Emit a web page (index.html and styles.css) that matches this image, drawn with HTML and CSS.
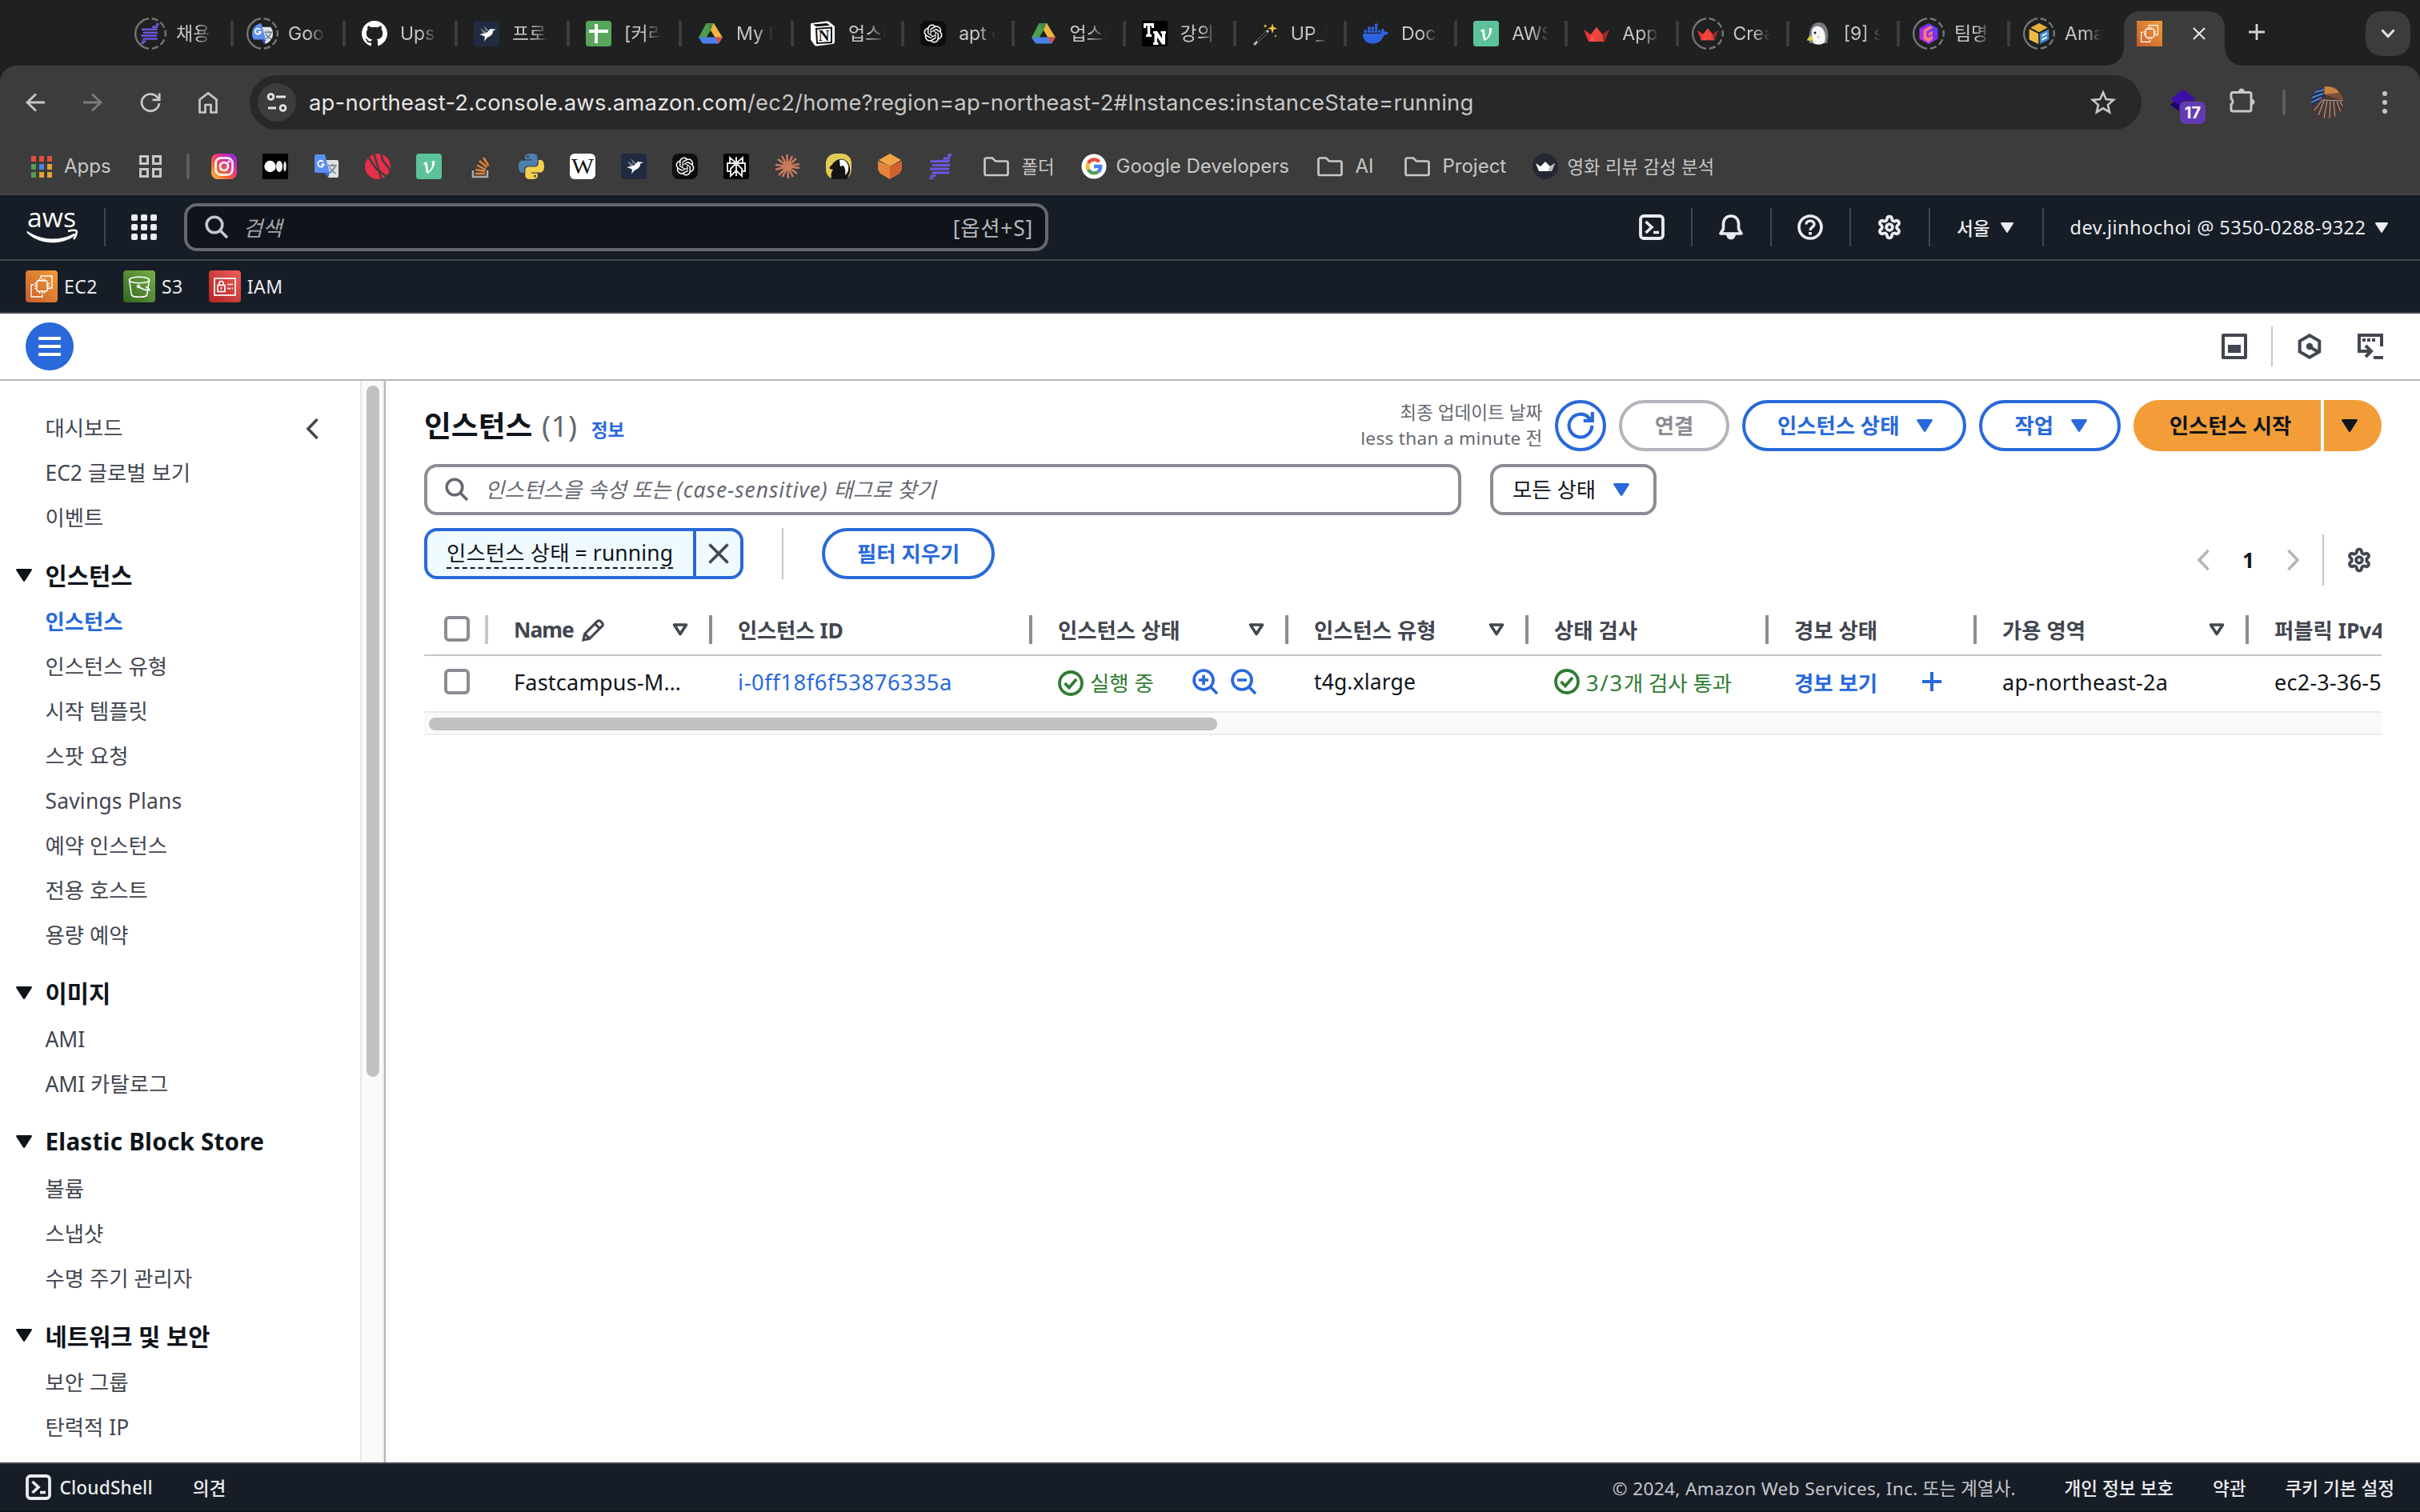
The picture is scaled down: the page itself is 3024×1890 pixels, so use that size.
FILE: index.html
```html
<!DOCTYPE html>
<html lang="ko">
<head>
<meta charset="utf-8">
<title>인스턴스 | EC2 | ap-northeast-2</title>
<link rel="stylesheet" href="styles.css">
</head>
<body>
<svg class="defs" width="0" height="0" aria-hidden="true">
  <defs>
    <linearGradient id="g-green" x1="0" y1="1" x2="1" y2="0"><stop offset="0" stop-color="#31681e"/><stop offset="1" stop-color="#79ae4b"/></linearGradient>
    <linearGradient id="g-red" x1="0" y1="1" x2="1" y2="0"><stop offset="0" stop-color="#b12325"/><stop offset="1" stop-color="#ec5e59"/></linearGradient>
    <linearGradient id="g-insta" x1="0" y1="1" x2="1" y2="0"><stop offset="0" stop-color="#fdc63c"/><stop offset=".35" stop-color="#f4603c"/><stop offset=".65" stop-color="#e0309a"/><stop offset="1" stop-color="#7a2df0"/></linearGradient>
    <linearGradient id="g-hex" x1="0" y1="1" x2="1" y2="0"><stop offset="0" stop-color="#d32df5"/><stop offset=".55" stop-color="#8a2cf0"/><stop offset="1" stop-color="#3a4bff"/></linearGradient>
    <clipPath id="c-avatar"><circle cx="20" cy="20" r="20"/></clipPath>
    <clipPath id="c-round"><circle cx="16" cy="16" r="16"/></clipPath>
  </defs>
  <symbol id="ring" viewBox="0 0 40 40"><circle cx="20" cy="20" r="18.800" fill="none" stroke="#747474" stroke-width="2.400" pathLength="360" stroke-dasharray="25 11 25 11 25 11 25 11 25 12 168 11" transform="rotate(-85 20 20)"/></symbol>
  <symbol id="bars" viewBox="0 0 32 32"><g fill="#6f55dc"><path d="M25 0h4.500l-1.500 4.500h-4.500z"/><path d="M19 4.500h8.500l-1 3H18z"/><path d="M3 8h24l-1 3.200H2z"/><path d="M5 13h22v3H5z"/><path d="M2 17.500h24v3.200H2z"/><path d="M5 22.500h22l-1 3H4z"/><path d="M3 26.500h7l-1 2.500H2z"/><path d="M2 29.500h5L6 32H1z"/></g></symbol>
  <symbol id="translate" viewBox="0 0 32 32"><path d="M12 8h17a2 2 0 0 1 2 2v18a2 2 0 0 1-2 2H18z" fill="#dfe1e5"/><path d="M18 15h11M23.500 13v2M27 15c-1 4-4 7-7 9M20 17c2 4 4 6 8 8" stroke="#6b7f92" stroke-width="1.600" fill="none"/><path d="M13 24h7l-2 6z" fill="#3a67c9"/><path d="M3 1h11l6 23H3a2 2 0 0 1-2-2V3a2 2 0 0 1 2-2z" fill="#5a8df0"/><path d="M12 10.500a3.800 3.800 0 1 0 .7 3H9.500" stroke="#fff" stroke-width="1.800" fill="none"/></symbol>
  <symbol id="translate-round" viewBox="0 0 32 32"><g clip-path="url(#c-round)"><path d="M14 6h18v22a4 4 0 0 1-4 4H20z" fill="#dfe1e5"/><path d="M19 14h12M25 12v2M29 14c-1 4-4 8-8 10M21 16c2 4 5 7 9 9" stroke="#6b7f92" stroke-width="1.800" fill="none"/><path d="M14 25h7l-2 7z" fill="#3a47b9"/><path d="M0 0h14l7 25H0z" fill="#5a8df0"/></g><path d="M12.500 10a4.300 4.300 0 1 0 .8 3.500H9.500" stroke="#fff" stroke-width="2.200" fill="none"/></symbol>
  <symbol id="github" viewBox="0 0 16 16"><path fill="#fff" d="M8 0C3.580 0 0 3.580 0 8c0 3.540 2.290 6.530 5.470 7.590.4.070.55-.17.55-.38 0-.19-.010-.82-.010-1.490-2.010.37-2.530-.49-2.690-.94-.090-.23-.48-.94-.82-1.130-.28-.15-.68-.52-.010-.53.63-.010 1.080.58 1.230.82.72 1.210 1.870.87 2.330.66.070-.52.28-.87.51-1.070-1.780-.2-3.640-.89-3.640-3.950 0-.87.31-1.590.82-2.150-.080-.2-.36-1.020.080-2.120 0 0 .67-.21 2.200.82.64-.18 1.320-.27 2-.27s1.360.090 2 .27c1.530-1.040 2.200-.82 2.200-.82.44 1.100.16 1.920.080 2.120.51.56.82 1.270.82 2.150 0 3.070-1.870 3.750-3.650 3.950.29.25.54.73.54 1.480 0 1.070-.010 1.930-.010 2.200 0 .21.15.46.55.38A8.010 8.010 0 0 0 16 8c0-4.420-3.580-8-8-8z"/></symbol>
  <symbol id="bird" viewBox="0 0 32 32"><rect width="32" height="32" rx="4" fill="#202b41"/><path d="M12 6l8 7-5-.5zM8 9l9 6-5 1z" fill="#777f8e"/><path d="M7 17l9-2 5-5 3 .6 4 .2-4 2c0 5-4 7-7 8l-4 5 1-6c-2-1-3-1.500-7-2.800z" fill="#fff"/></symbol>
  <symbol id="sheet" viewBox="0 0 32 32"><rect width="32" height="32" rx="3.500" fill="#57a65b"/><path d="M11 4h4v24h-4zM4 11h24v4H4z" fill="#fff"/></symbol>
  <symbol id="drive" viewBox="0 0 32 32"><path d="M10.500 3h9.500L31 21h-9.500z" fill="#f2b53d"/><path d="M10.500 3L16 12 6.500 28 1 21z" fill="#4b9e4f"/><path d="M10.500 3h9L16 12z" fill="#3f8f49"/><path d="M16 12.500l4.500 7.500h-9z" fill="#1f2120"/><path d="M1 20.500h30l-5 8H6z" fill="#4a80ec"/><path d="M21.500 20.500H31l-5 8z" fill="#d9503f"/></symbol>
  <symbol id="notion" viewBox="0 0 32 32"><path d="M2 3l19-2.500c2 0 3 .5 4 1.500l5 4c1 1 1 1.500 1 3v17c0 2-1 3-3 3L9 31.500c-2 0-2.500-.5-3.500-1.500L2 25c-1-1-1-2-1-3V5c0-1 0-1.800 1-2z" fill="#fff"/><path d="M4 4.500l17-1.500 4 3-17 1.200z" fill="#111"/><path d="M8 10l19-1.500V27L9 28z" fill="#fff" stroke="#111" stroke-width="2"/><text x="17.500" y="25" text-anchor="middle" class="ico-serif" font-size="19" fill="#111">N</text></symbol>
  <symbol id="gpt" viewBox="0 0 32 32"><rect width="32" height="32" rx="8" fill="#0d0d0d"/><path transform="translate(4.500 4.500) scale(.958)" fill="#fff" d="M22.2819 9.8211a5.9847 5.9847 0 0 0-.5157-4.9108 6.0462 6.0462 0 0 0-6.5098-2.9A6.0651 6.0651 0 0 0 4.9807 4.1818a5.9847 5.9847 0 0 0-3.9977 2.9 6.0462 6.0462 0 0 0 .7427 7.0966 5.98 5.98 0 0 0 .511 4.9107 6.051 6.051 0 0 0 6.5146 2.9001A5.9847 5.9847 0 0 0 13.2599 24a6.0557 6.0557 0 0 0 5.7718-4.2058 5.9894 5.9894 0 0 0 3.9977-2.9001 6.0557 6.0557 0 0 0-.7475-7.0729zm-9.022 12.6081a4.4755 4.4755 0 0 1-2.8764-1.0408l.1419-.0804 4.7783-2.7582a.7948.7948 0 0 0 .3927-.6813v-6.7369l2.02 1.1686a.071.071 0 0 1 .038.052v5.5826a4.504 4.504 0 0 1-4.4945 4.4944zm-9.6607-4.1254a4.4708 4.4708 0 0 1-.5346-3.0137l.142.0852 4.783 2.7582a.7712.7712 0 0 0 .7806 0l5.8428-3.3685v2.3324a.0804.0804 0 0 1-.0332.0615L9.74 19.9502a4.4992 4.4992 0 0 1-6.1408-1.6464zM2.3408 7.8956a4.485 4.485 0 0 1 2.3655-1.9728V11.6a.7664.7664 0 0 0 .3879.6765l5.8144 3.3543-2.0201 1.1685a.0757.0757 0 0 1-.071 0l-4.8303-2.7865A4.504 4.504 0 0 1 2.3408 7.872zm16.5963 3.8558L13.1038 8.364 15.1192 7.2a.0757.0757 0 0 1 .071 0l4.8303 2.7913a4.4944 4.4944 0 0 1-.6765 8.1042v-5.6772a.79.79 0 0 0-.407-.667zm2.0107-3.0231l-.142-.0852-4.7735-2.7818a.7759.7759 0 0 0-.7854 0L9.409 9.2297V6.8974a.0662.0662 0 0 1 .0284-.0615l4.8303-2.7866a4.4992 4.4992 0 0 1 6.6802 4.66zM8.3065 12.863l-2.02-1.1638a.0804.0804 0 0 1-.038-.0567V6.0742a4.4992 4.4992 0 0 1 7.3757-3.4537l-.142.0805L8.704 5.459a.7948.7948 0 0 0-.3927.6813zm1.0976-2.3654l2.602-1.4998 2.6069 1.4998v2.9994l-2.5974 1.4997-2.6067-1.4997Z"/></symbol>
  <symbol id="tn" viewBox="0 0 32 32"><rect width="32" height="32" fill="#000"/><path d="M2 3h13v6h-3V6.500h-1.800V17H12v3H5v-3h1.800V6.500H5V9H2z" fill="#fff"/><path d="M14 13h5l6 9v-6h-1.500v-3H30v3h-1v13.500h-4l-6-9v6.500h1.500v3H14v-3h1.500V16H14z" fill="#fff"/></symbol>
  <symbol id="wand" viewBox="0 0 32 32"><path d="M2 30L20 12" stroke="#bdbdbd" stroke-width="3"/><path d="M6 26L18 14" stroke="#111" stroke-width="2.200"/><path d="M25 3l1.500 5 4.500 1.500-4.500 1.500L25 16l-1.500-5L19 9.500 23.500 8z" fill="#f5c542"/><path d="M16 4l.7 1.800 1.800.7-1.800.7L16 9l-.7-1.800-1.800-.7 1.800-.7zM29 17l.5 1.500 1.500.5-1.500.5L29 21l-.5-1.500-1.500-.5 1.500-.5z" fill="#f5c542"/></symbol>
  <symbol id="docker" viewBox="0 0 32 32"><path fill="#2f62e3" d="M0 16h22c1.500-1 1.500-3.500 1-5l1.500-1.500c1.500 1 2.200 2.500 2.300 4 1.500-.3 3.500 0 5.200 1-1 2.500-3 3.200-5.500 3.200C24 25 18.500 28.500 12 28.500 4 28.500 0 23.500 0 16zM1.500 11.500H5v3.500H1.500zM6 11.500h3.500v3.500H6zM10.500 11.500H14v3.500h-3.500zM15 11.500h3.500v3.500H15zM19.500 11.500h2.500v3.500h-2.500zM6 7.500h3.500V11H6zM10.500 7.500H14V11h-3.500zM15 7.500h3.500V11H15zM15 3.500h3.500V7H15z"/></symbol>
  <symbol id="velog" viewBox="0 0 32 32"><rect width="32" height="32" rx="3.500" fill="#5cc29a"/><path d="M9.500 11.500l4-1.500 2 13C19 19 21 15 19.500 9.500l3.500-.5c1 5-2 11-7.500 15.500h-2.500l-2-11-1.500.3z" fill="#fff"/></symbol>
  <symbol id="crown" viewBox="0 0 32 32"><path d="M0 11l9 6 7-9 7 9 9-6-6 15H6z" fill="#e5342f"/><path d="M32 11l-9 6 1.500 9H26z" fill="#8f2a2b"/><path d="M16 8l7 9-7 9-7-9z" fill="#f0453f"/><path d="M9 17l7 9H7z" fill="#ff4b4b"/><path d="M23 17l-7 9h9z" fill="#e5443c"/></symbol>
  <symbol id="goose" viewBox="0 0 32 32"><path d="M5 28C3 12 8 2 17 2s14 10 10 26z" fill="#777b80"/><path d="M8 12C10 7 14 6 17 7c8 2 9 14 7 20-5 4-11 3-14 1-2-5-2-11-2-16z" fill="#f6f6f6"/><circle cx="12" cy="15" r="1.500" fill="#222"/><circle cx="16" cy="20" r="1.600" fill="#f3b991"/><path d="M7 18l2 4-1 3-6-.5c0-2 2-4 5-6.500z" fill="#e2cf3e"/></symbol>
  <symbol id="hex" viewBox="0 0 32 32"><path d="M16 0l14 8v16l-14 8-14-8V8z" fill="url(#g-hex)"/><path d="M23 7l-10 5.500v8l3 2 6-4v6l-6 4.500-8-5V10.500L18 4zM16 15l6-3v5l-6 3z" fill="#f27d78"/></symbol>
  <symbol id="awsdoc" viewBox="0 0 32 32"><path d="M16 0l13 7-13 7L3 7z" fill="#e3b13c"/><path d="M1 9l14 7v16L1 25z" fill="#edbb45"/><path d="M17 16l14-7v16l-14 7z" fill="#3f86c6"/><path d="M20 18l8-4v3l-8 4zM20 24l8-4v3l-8 4z" fill="#dcecf8"/></symbol>
  <symbol id="ec2" viewBox="0 0 40 40"><g fill="none" stroke="#fff" stroke-width="1.400"><path d="M19 10V7h14v15h-3M10 18H7v15h14v-3"/><rect x="14" y="13" width="13" height="13" rx="1"/><path d="M17.500 10v3M20.500 10v3M23.500 10v3M17.500 26v3M20.500 26v3M23.500 26v3M11 16.500h3M11 19.500h3M11 22.500h3M27 16.500h3M27 19.500h3M27 22.500h3"/></g></symbol>

  <symbol id="back" viewBox="0 0 32 32"><path d="M28 16H6M17 5.500L6 16l11 10.500" fill="none" stroke="currentColor" stroke-width="2.800"/></symbol>
  <symbol id="reload" viewBox="0 0 32 32"><path d="M27 17a11 10.500 0 1 1-2.500-7.500L27 12" fill="none" stroke="currentColor" stroke-width="2.800"/><path d="M27.200 4.500v8.300h-8.700" fill="none" stroke="currentColor" stroke-width="2.800"/></symbol>
  <symbol id="home" viewBox="0 0 32 32"><path d="M5.500 12.500L16 4.500l10.500 8V28.500h-7V19h-7v9.500h-7z" fill="none" stroke="currentColor" stroke-width="2.700"/></symbol>
  <symbol id="tune" viewBox="0 0 32 32"><g fill="none" stroke="currentColor" stroke-width="2.800"><circle cx="8.500" cy="9" r="3.400"/><path d="M15 9h12M5 23h10"/><circle cx="23.500" cy="23" r="3.400"/></g></symbol>
  <symbol id="star" viewBox="0 0 32 32"><path d="M16 3.500l3.700 8.600 9.300.8-7 6.200 2.100 9.100-8.100-4.900-8.100 4.900L10 19.100l-7-6.200 9.300-.8z" fill="none" stroke="currentColor" stroke-width="2.600"/></symbol>
  <symbol id="puzzle" viewBox="0 0 32 32"><path d="M4 6.500h21a2 2 0 0 1 2 2V28a2 2 0 0 1-2 2H4a2 2 0 0 1-2-2v-6.500a4 4 0 0 0 0-7V8.500a2 2 0 0 1 2-2z" fill="none" stroke="currentColor" stroke-width="3"/><path d="M11 6a4 4.500 0 0 1 8 0zM27 14.500a4.500 4 0 0 1 0 8z" fill="currentColor"/></symbol>
  <symbol id="folder" viewBox="0 0 32 32"><path d="M3.500 5.500H11l4 4h13.500a2 2 0 0 1 2 2V25a2 2 0 0 1-2 2h-25a2 2 0 0 1-2-2V7.500a2 2 0 0 1 2-2z" fill="none" stroke="currentColor" stroke-width="2.700"/></symbol>
  <symbol id="shell" viewBox="0 0 32 32"><rect x="2" y="2" width="28" height="28" rx="4" fill="none" stroke="currentColor" stroke-width="3.800"/><path d="M8.500 9l7.500 7-7.500 7M18 22.500h7" fill="none" stroke="currentColor" stroke-width="3.600"/></symbol>
  <symbol id="bell" viewBox="0 0 32 32"><path d="M3 24h26l-3.500-6v-6.500c0-5.500-4-9.500-9.500-9.500s-9.500 4-9.500 9.500V18z" fill="none" stroke="currentColor" stroke-width="3.600" stroke-linejoin="round"/><path d="M10 25h12a6 6.500 0 0 1-12 0z" fill="currentColor"/></symbol>
  <symbol id="help" viewBox="0 0 32 32"><circle cx="16" cy="16" r="14" fill="none" stroke="currentColor" stroke-width="3.600"/><path d="M11 12.500c0-6 10-6 10 0 0 3.500-5 3.500-5 7.500" fill="none" stroke="currentColor" stroke-width="3.400"/><path d="M14.200 22h3.700v3.600h-3.700z" fill="currentColor"/></symbol>
  <symbol id="gear" viewBox="0 0 24 24"><g fill="none" stroke="currentColor" stroke-width="2.900"><path d="M12.220 2h-.44a2 2 0 0 0-2 2v.18a2 2 0 0 1-1 1.730l-.43.25a2 2 0 0 1-2 0l-.15-.08a2 2 0 0 0-2.730.73l-.22.38a2 2 0 0 0 .73 2.730l.15.1a2 2 0 0 1 1 1.720v.51a2 2 0 0 1-1 1.740l-.15.09a2 2 0 0 0-.73 2.730l.22.38a2 2 0 0 0 2.730.73l.15-.08a2 2 0 0 1 2 0l.43.25a2 2 0 0 1 1 1.730V20a2 2 0 0 0 2 2h.44a2 2 0 0 0 2-2v-.18a2 2 0 0 1 1-1.730l.43-.25a2 2 0 0 1 2 0l.15.08a2 2 0 0 0 2.730-.73l.22-.39a2 2 0 0 0-.73-2.730l-.15-.08a2 2 0 0 1-1-1.740v-.5a2 2 0 0 1 1-1.740l.15-.09a2 2 0 0 0 .73-2.730l-.22-.38a2 2 0 0 0-2.730-.73l-.15.08a2 2 0 0 1-2 0l-.43-.25a2 2 0 0 1-1-1.730V4a2 2 0 0 0-2-2z"/><circle cx="12" cy="12" r="2.900"/></g></symbol>
  <symbol id="search" viewBox="0 0 30 30"><circle cx="12" cy="12" r="9.800" fill="none" stroke="currentColor" stroke-width="3.600"/><path d="M19 19l9 9" stroke="currentColor" stroke-width="3.600"/></symbol>
  <symbol id="zoomin" viewBox="0 0 32 32"><g fill="none" stroke="currentColor" stroke-width="3.700"><circle cx="14" cy="14" r="12"/><path d="M22 22l9 9M8 14h12M14 8v12"/></g></symbol>
  <symbol id="zoomout" viewBox="0 0 32 32"><g fill="none" stroke="currentColor" stroke-width="3.700"><circle cx="14" cy="14" r="12"/><path d="M22 22l9 9M8 14h12"/></g></symbol>
  <symbol id="check" viewBox="0 0 32 32"><g fill="none" stroke="currentColor" stroke-width="3.800"><circle cx="16" cy="16" r="14"/><path d="M8.500 16l5.500 5.500 9-10.500"/></g></symbol>
  <symbol id="caret" viewBox="0 0 20 16"><path d="M1.500 0h17c1.300 0 1.900 1.300 1 2.300l-8.300 13c-.6.900-1.700.9-2.300 0L.5 2.300C-.3 1.300.2 0 1.500 0z" fill="currentColor"/></symbol>
  <symbol id="filter" viewBox="0 0 20 16"><path d="M2.500 2h15L10 13.500z" fill="none" stroke="currentColor" stroke-width="3.600" stroke-linejoin="round"/></symbol>
  <symbol id="left" viewBox="0 0 16 28"><path d="M14.500 2L3 14l11.500 12" fill="none" stroke="currentColor" stroke-width="3.600"/></symbol>
  <symbol id="right" viewBox="0 0 16 28"><path d="M1.500 2L13 14 1.500 26" fill="none" stroke="currentColor" stroke-width="3.600"/></symbol>
  <symbol id="close" viewBox="0 0 26 26"><path d="M1.500 1.500l23 23M24.500 1.500l-23 23" stroke="currentColor" stroke-width="3.600"/></symbol>
  <symbol id="plus" viewBox="0 0 24 24"><path d="M12 0v24M0 12h24" stroke="currentColor" stroke-width="4"/></symbol>
</svg>

<div class="tabstrip">
  <div class="tab"><span class="fav loading"><svg class="i32"><use href="#bars"/></svg><svg class="ring"><use href="#ring"/></svg></span><span class="tab-title">채용</span></div>
  <div class="tab"><span class="fav loading"><svg class="i32"><use href="#translate-round"/></svg><svg class="ring"><use href="#ring"/></svg></span><span class="tab-title">Goog</span></div>
  <div class="tab"><svg class="i32"><use href="#github"/></svg><span class="tab-title">Upst</span></div>
  <div class="tab"><svg class="i32"><use href="#bird"/></svg><span class="tab-title">프로그</span></div>
  <div class="tab"><svg class="i32"><use href="#sheet"/></svg><span class="tab-title">[커리</span></div>
  <div class="tab"><svg class="i32"><use href="#drive"/></svg><span class="tab-title">My D</span></div>
  <div class="tab narrow"><svg class="i32"><use href="#notion"/></svg><span class="tab-title">업스테</span></div>
  <div class="tab narrow"><svg class="i32"><use href="#gpt"/></svg><span class="tab-title">apt c</span></div>
  <div class="tab narrow"><svg class="i32"><use href="#drive"/></svg><span class="tab-title">업스테</span></div>
  <div class="tab narrow"><svg class="i32"><use href="#tn"/></svg><span class="tab-title">강의</span></div>
  <div class="tab narrow"><svg class="i32"><use href="#wand"/></svg><span class="tab-title">UP_S</span></div>
  <div class="tab narrow"><svg class="i32"><use href="#docker"/></svg><span class="tab-title">Dock</span></div>
  <div class="tab narrow"><svg class="i32"><use href="#velog"/></svg><span class="tab-title">AWS</span></div>
  <div class="tab narrow"><svg class="i32"><use href="#crown"/></svg><span class="tab-title">App</span></div>
  <div class="tab narrow"><span class="fav loading"><svg class="i32"><use href="#crown"/></svg><svg class="ring"><use href="#ring"/></svg></span><span class="tab-title">Crea</span></div>
  <div class="tab narrow"><svg class="i32"><use href="#goose"/></svg><span class="tab-title">[9] s</span></div>
  <div class="tab narrow"><span class="fav loading"><svg class="i32"><use href="#hex"/></svg><svg class="ring"><use href="#ring"/></svg></span><span class="tab-title">팀명</span></div>
  <div class="tab narrow last"><span class="fav loading"><svg class="i32"><use href="#awsdoc"/></svg><svg class="ring"><use href="#ring"/></svg></span><span class="tab-title">Amaz</span></div>
  <div class="tab-active">
    <svg class="i32 ec2-fav" viewBox="0 0 40 40"><use href="#ec2"/></svg>
    <svg class="tab-close"><use href="#close"/></svg>
  </div>
  <svg class="new-tab" viewBox="0 0 20 20"><path d="M10 0v20M0 10h20" stroke="#d5d5d5" stroke-width="2.800"/></svg>
  <div class="tab-menu"><svg width="18" height="12" viewBox="0 0 18 12"><path d="M1.500 1.500L9 9.500l7.500-8" fill="none" stroke="#e3e3e3" stroke-width="3"/></svg></div>
</div>

<div class="toolbar">
  <svg class="i32"><use href="#back"/></svg>
  <svg class="i32 dim" viewBox="0 0 32 32"><use href="#back" transform="rotate(180 16 16)"/></svg>
  <svg class="i32"><use href="#reload"/></svg>
  <svg class="i32"><use href="#home"/></svg>
  <div class="omnibox">
    <span class="site-info"><svg class="i32"><use href="#tune"/></svg></span>
    <span class="url"><b>ap-northeast-2.console.aws.amazon.com</b>/ec2/home?region=ap-northeast-2#Instances:instanceState=running</span>
    <svg class="i32 star"><use href="#star"/></svg>
  </div>
  <div class="ext">
    <svg width="44" height="44" viewBox="0 0 44 44"><path d="M16 0l16 11.500L16 24 0 11.500z" fill="#3d0fa8"/><path d="M0 19l5-4 11 8 0 8z" fill="#210070"/></svg>
    <span class="badge">17</span>
  </div>
  <svg class="i32 puzzle"><use href="#puzzle"/></svg>
  <span class="tool-sep"></span>
  <svg class="avatar" viewBox="0 0 40 40"><g clip-path="url(#c-avatar)"><rect width="40" height="40" fill="#4a3733"/><path d="M0 0h17v12L0 26z" fill="#1d3566"/><path d="M15 0h25v18L16 10z" fill="#7a5038"/><path d="M17 0h12l6 8-18 2z" fill="#c8823f"/><path d="M2 8l14-4M1 14l14-5M0 20l13-6" stroke="#6e8fc4" stroke-width="1.500"/><path d="M14 17l26 1M14 17L4 30M16 18L9 36M20 18l-4 22M24 18l-1 22M28 18l2 22M32 19l6 16M36 19l6 10" stroke="#b3a196" stroke-width="1.100" fill="none"/></g></svg>
  <svg class="kebab" viewBox="0 0 8 32"><circle cx="4" cy="5" r="3" fill="#c7c7c7"/><circle cx="4" cy="16" r="3" fill="#c7c7c7"/><circle cx="4" cy="27" r="3" fill="#c7c7c7"/></svg>
</div>

<div class="bookmarks">
  <svg class="apps-grid" viewBox="0 0 26 27"><g><path d="M0 0h6v7H0zM10 0h6v7h-6zM20 0h6v7h-6z" fill="#e0503f"/><path d="M0 10h6v7H0zM0 20h6v7H0z" fill="#4f9f54"/><path d="M10 10h6v7h-6z" fill="#4a84ee"/><path d="M20 10h6v7h-6zM10 20h6v7h-6zM20 20h6v7h-6z" fill="#e3a52f"/></g></svg>
  <span class="bm-text apps-label">Apps</span>
  <svg class="group-grid" viewBox="0 0 28 28"><g fill="none" stroke="#c7c7c7" stroke-width="3"><rect x="1.500" y="1.500" width="9" height="9"/><rect x="17.500" y="1.500" width="9" height="9"/><rect x="1.500" y="17.500" width="9" height="9"/><rect x="17.500" y="17.500" width="9" height="9"/></g></svg>
  <span class="tool-sep bm-sep"></span>
  <div class="bm-icons">
    <svg class="i32" viewBox="0 0 32 32"><rect width="32" height="32" rx="8" fill="url(#g-insta)"/><g fill="none" stroke="#fff" stroke-width="2.600"><rect x="5.500" y="5.500" width="21" height="21" rx="6.500"/><circle cx="16" cy="16" r="5"/></g><circle cx="22" cy="10" r="1.600" fill="#fff"/></svg>
    <svg class="i32" viewBox="0 0 32 32"><rect width="32" height="32" fill="#000"/><circle cx="9.500" cy="16" r="7.200" fill="#fff"/><ellipse cx="21" cy="16" rx="4" ry="7" fill="#f2f2f2"/><ellipse cx="28" cy="16" rx="1.800" ry="6.200" fill="#ddd"/></svg>
    <svg class="i32"><use href="#translate"/></svg>
    <svg class="i32" viewBox="0 0 32 32"><g clip-path="url(#c-round)"><rect width="32" height="32" fill="#e32f49"/><path d="M11 -1l5 17 5 17M4 4l10 15 16 12M20 -2l2 10 12 16" stroke="#3c3c3c" stroke-width="2.400" fill="none"/></g></svg>
    <svg class="i32"><use href="#velog"/></svg>
    <svg class="i32" viewBox="0 0 32 32"><path d="M7 21v8h18v-8" fill="none" stroke="#a5a9ad" stroke-width="2.600"/><path d="M10 25h12M10.500 20l11.500 2M12 14.500l11 5.500M15 9l9.500 8M20 5l6.500 10" stroke="#e08338" stroke-width="2.500"/></svg>
    <svg class="i32" viewBox="0 0 32 32"><path d="M15.900 0C7.700 0 8.200 3.600 8.200 3.600v3.700H16v1.100H5.100S0 7.800 0 16s4.500 7.900 4.500 7.900h2.700v-3.800s-.2-4.500 4.400-4.500h7.700s4.300.1 4.300-4.100V4.600S24.300 0 15.900 0zM11.600 2.500a1.400 1.400 0 1 1 0 2.800 1.400 1.400 0 0 1 0-2.800z" fill="#4b80b0"/><path transform="rotate(180 16 16)" d="M15.900 0C7.700 0 8.200 3.600 8.200 3.600v3.700H16v1.100H5.100S0 7.800 0 16s4.500 7.900 4.500 7.900h2.700v-3.800s-.2-4.500 4.400-4.500h7.700s4.300.1 4.300-4.100V4.600S24.300 0 15.900 0zM11.600 2.500a1.400 1.400 0 1 1 0 2.800 1.400 1.400 0 0 1 0-2.800z" fill="#f3d14f"/></svg>
    <svg class="i32" viewBox="0 0 32 32"><rect width="32" height="32" rx="6" fill="#fff"/><text x="16" y="25" text-anchor="middle" class="ico-w" font-size="27" textLength="28" lengthAdjust="spacingAndGlyphs" fill="#111">W</text></svg>
    <svg class="i32"><use href="#bird"/></svg>
    <svg class="i32"><use href="#gpt"/></svg>
    <svg class="i32" viewBox="0 0 32 32"><rect width="32" height="32" rx="3" fill="#000"/><path d="M16 4v24M16 12L8 5v7h16V5zM8 12H5v10h4M24 12h3v10h-4M16 12l-7 7v9l7-7 7 7v-9z" fill="none" stroke="#eee" stroke-width="1.900"/></svg>
    <svg class="i32" viewBox="0 0 32 32"><path d="M16 16L15.500 1M16 16l6-13M16 16L27 6M16 16l15-3M16 16l15 2M16 16l12 9M16 16l7 13M16 16l1 15M16 16l-6 13M16 16L5 27M16 16L1 20M16 16L1 14M16 16L4 7M16 16L9 3" stroke="#cb7a5d" stroke-width="2.500"/></svg>
    <svg class="i32" viewBox="0 0 32 32"><rect width="32" height="32" rx="12" fill="#e2cb55"/><path d="M7 32c-1-6 0-9 2-12l-4-1c-1-2 1-4 3-5 3-6 11-9 16-6 5 3 7 10 6 16l-4 8z" fill="#141414"/><path d="M17 8c5-2 9 1 11 7 1 5-1 10-4 12 1-5 0-9-2-12l-4 1z" fill="#fff"/></svg>
    <svg class="i32" viewBox="0 0 32 32"><path d="M16 0l14 8-14 8L2 8z" fill="#f2a445"/><path d="M1 9l15 7v16L4 25l-3-5z" fill="#e6833a"/><path d="M31 9l-15 7v16l12-7 3-5z" fill="#d2602f"/></svg>
    <svg class="i32"><use href="#bars"/></svg>
  </div>
  <div class="bm folder1"><svg class="i32"><use href="#folder"/></svg><span class="bm-text ko">폴더</span></div>
  <div class="bm google"><svg class="i32" viewBox="0 0 32 32"><circle cx="16" cy="16" r="15.500" fill="#fff"/><g fill="none" stroke-width="4.400"><path d="M22.500 10.200A8.200 8.200 0 0 0 9 12" stroke="#e0503f"/><path d="M9 12a8.500 8.500 0 0 0 0 8" stroke="#f2b92f"/><path d="M9 20a8.200 8.200 0 0 0 12.500 2.500" stroke="#4f9f54"/><path d="M21.500 22.500A8.200 8.200 0 0 0 24.200 16H16" stroke="#4a80ec"/></g></svg><span class="bm-text">Google Developers</span></div>
  <div class="bm folder2"><svg class="i32"><use href="#folder"/></svg><span class="bm-text">AI</span></div>
  <div class="bm folder3"><svg class="i32"><use href="#folder"/></svg><span class="bm-text">Project</span></div>
  <div class="bm movie"><svg class="i32" viewBox="0 0 32 32"><circle cx="16" cy="16" r="16" fill="#252732"/><path d="M4 12l6 4 6-6 6 6 6-4-4 10H8z" fill="#fff"/><path d="M22 16l6-4-4 10h-5z" fill="#bbb"/></svg><span class="bm-text ko">영화 리뷰 감성 분석</span></div>
</div>

<header class="aws-nav">
  <svg class="aws-logo" viewBox="0 0 66 42"><text x="1" y="20.500" class="logo-text" font-size="33" textLength="61" lengthAdjust="spacingAndGlyphs" fill="#fff">aws</text><path d="M1 26c17 12 41 13 59 3l1 2C44 44 16 43 1 28z" fill="#fff" stroke="#fff" stroke-width=".6"/><path d="M52 26c5-1.500 9-1.500 10.500-.5 1 2-.5 7-3.500 10.500" fill="none" stroke="#fff" stroke-width="2.500"/></svg>
  <span class="nav-sep first"></span>
  <svg class="grid-icon" viewBox="0 0 32 32"><g fill="#ebebf0"><rect width="8" height="8" rx="2"/><rect x="12" width="8" height="8" rx="2"/><rect x="24" width="8" height="8" rx="2"/><rect y="12" width="8" height="8" rx="2"/><rect x="12" y="12" width="8" height="8" rx="2"/><rect x="24" y="12" width="8" height="8" rx="2"/><rect y="24" width="8" height="8" rx="2"/><rect x="12" y="24" width="8" height="8" rx="2"/><rect x="24" y="24" width="8" height="8" rx="2"/></g></svg>
  <div class="nav-search"><svg class="i30"><use href="#search"/></svg><span class="ph">검색</span><span class="hotkey">[옵션+S]</span></div>
  <div class="nav-right">
    <svg class="i32"><use href="#shell"/></svg><span class="nav-sep"></span>
    <svg class="i32"><use href="#bell"/></svg><span class="nav-sep"></span>
    <svg class="i32"><use href="#help"/></svg><span class="nav-sep"></span>
    <svg class="i32"><use href="#gear"/></svg><span class="nav-sep"></span>
    <span class="region"><span>서울</span><svg class="caret-s"><use href="#caret"/></svg></span><span class="nav-sep"></span>
    <span class="account"><span>dev.jinhochoi @ 5350-0288-9322</span><svg class="caret-s"><use href="#caret"/></svg></span>
  </div>
</header>

<nav class="fav-bar">
  <a class="svc"><svg class="i40 ec2-tile"><use href="#ec2"/></svg><span>EC2</span></a>
  <a class="svc"><svg class="i40" viewBox="0 0 40 40"><rect width="40" height="40" rx="4" fill="url(#g-green)"/><g fill="none" stroke="#fff" stroke-width="1.600"><ellipse cx="20" cy="12" rx="12.500" ry="3.800"/><path d="M7.500 12l3 19c2 3 17 3 19 0l3-19"/><circle cx="19" cy="20" r="1.500"/><path d="M20 21c5 3 10 4 13 3.500-1-2-3-3-5-4"/></g></svg><span>S3</span></a>
  <a class="svc"><svg class="i40" viewBox="0 0 40 40"><rect width="40" height="40" rx="4" fill="url(#g-red)"/><g fill="none" stroke="#fff" stroke-width="1.700"><rect x="7" y="10" width="26" height="21"/><rect x="11" y="18.500" width="9" height="8"/><path d="M13 18.500v-2.500a2.500 2.500 0 0 1 5 0v2.500M15.500 21v3M23 17.500h7M23 22.500h4M28.500 22.500h1.500"/></g></svg><span>IAM</span></a>
</nav>

<div class="tool-bar">
  <button class="menu-btn"><svg width="28" height="24" viewBox="0 0 28 24"><path d="M0 2h28M0 12h28M0 22h28" stroke="#fff" stroke-width="4"/></svg></button>
  <div class="tool-right">
    <svg class="i32" viewBox="0 0 32 32"><path d="M2 2h28v28H2z" fill="none" stroke="currentColor" stroke-width="4" stroke-linejoin="round"/><path d="M8 14h16v10H8z" fill="currentColor"/></svg>
    <span class="tr-sep"></span>
    <svg class="i32 hexicon" viewBox="0 0 32 32"><path d="M16 2.300l12.300 7v13.400l-12.300 7-12.300-7V9.300z" fill="none" stroke="currentColor" stroke-width="4"/><circle cx="16" cy="16" r="4.200" fill="currentColor"/><path d="M17 17l9 5.500" stroke="currentColor" stroke-width="4"/></svg>
    <svg class="i32" viewBox="0 0 32 32"><path d="M30 16V2H2v20h16" fill="none" stroke="currentColor" stroke-width="4"/><path d="M10 15l7 7-7 7" fill="none" stroke="currentColor" stroke-width="4"/><path d="M6 6h4v4H6zM12 6h4v4h-4zM18 6h4v4h-4zM20 28h12v4H20z" fill="currentColor"/></svg>
  </div>
</div>

<div class="workspace">
  <aside class="sidebar">
    <div class="side-nav">
      <svg class="collapse"><use href="#left"/></svg>
      <a class="item">대시보드</a>
      <a class="item">EC2 글로벌 보기</a>
      <a class="item">이벤트</a>
      <div class="group"><svg class="tri"><use href="#caret"/></svg><span>인스턴스</span></div>
      <a class="item active">인스턴스</a>
      <a class="item">인스턴스 유형</a>
      <a class="item">시작 템플릿</a>
      <a class="item">스팟 요청</a>
      <a class="item sp">Savings Plans</a>
      <a class="item">예약 인스턴스</a>
      <a class="item">전용 호스트</a>
      <a class="item">용량 예약</a>
      <div class="group"><svg class="tri"><use href="#caret"/></svg><span>이미지</span></div>
      <a class="item">AMI</a>
      <a class="item">AMI 카탈로그</a>
      <div class="group"><svg class="tri"><use href="#caret"/></svg><span class="ebs">Elastic Block Store</span></div>
      <a class="item">볼륨</a>
      <a class="item">스냅샷</a>
      <a class="item">수명 주기 관리자</a>
      <div class="group"><svg class="tri"><use href="#caret"/></svg><span>네트워크 및 보안</span></div>
      <a class="item">보안 그룹</a>
      <a class="item">탄력적 IP</a>
      <a class="item">배치 그룹</a>
    </div>
    <div class="v-track"><div class="v-thumb"></div></div>
  </aside>

  <main class="main">
    <div class="title-row">
      <h1>인스턴스 <span class="count">(1)</span></h1><a class="info">정보</a>
      <div class="actions">
        <div class="updated">최종 업데이트 날짜<br><span class="ago">less than a minute</span> 전</div>
        <button class="refresh"><svg class="i34" viewBox="0 0 32 32"><path d="M29.500 16A13.500 13.500 0 1 1 25 6l4 4" fill="none" stroke="currentColor" stroke-width="3.900"/><path d="M30 0v10.200H19.500" fill="none" stroke="currentColor" stroke-width="3.900"/></svg></button>
        <button class="btn disabled"><span>연결</span></button>
        <button class="btn"><span>인스턴스 상태</span><svg class="caret"><use href="#caret"/></svg></button>
        <button class="btn"><span>작업</span><svg class="caret"><use href="#caret"/></svg></button>
        <div class="split"><button class="primary"><span>인스턴스 시작</span></button><button class="primary-menu"><svg class="caret"><use href="#caret"/></svg></button></div>
      </div>
    </div>
    <div class="search-row">
      <div class="filter-input"><svg class="i30"><use href="#search"/></svg><span>인스턴스을 속성 또는 <i class="la">(case-sensitive)</i> 태그로 찾기</span></div>
      <div class="select"><span>모든 상태</span><svg class="caret"><use href="#caret"/></svg></div>
    </div>
    <div class="token-row">
      <div class="token"><span class="token-label"><u>인스턴스 상태 = running</u></span><span class="token-x"><svg class="i26"><use href="#close"/></svg></span></div>
      <span class="token-sep"></span>
      <button class="btn clear"><span>필터 지우기</span></button>
      <div class="pager">
        <svg class="chev"><use href="#left"/></svg><b>1</b><svg class="chev"><use href="#right"/></svg>
        <span class="pager-sep"></span>
        <svg class="i32 dark"><use href="#gear"/></svg>
      </div>
    </div>
    <div class="table">
      <div class="row head">
        <div class="cell check"><span class="box"></span></div>
        <div class="cell"><span class="h-name">Name</span><svg class="pencil" viewBox="0 0 30 30"><path d="M2 28l1.800-8L20 3.800c1.300-1.300 3-1.300 4.300 0l2 2c1.200 1.200 1.200 3 0 4.200L10 26.200zM17 7l6.200 6.200M4 20l6 6" fill="none" stroke="currentColor" stroke-width="3.200"/></svg><svg class="caret sort"><use href="#filter"/></svg></div>
        <div class="cell"><span class="h-id">인스턴스 ID</span></div>
        <div class="cell"><span>인스턴스 상태</span><svg class="caret sort"><use href="#filter"/></svg></div>
        <div class="cell"><span>인스턴스 유형</span><svg class="caret sort"><use href="#filter"/></svg></div>
        <div class="cell"><span>상태 검사</span></div>
        <div class="cell"><span>경보 상태</span></div>
        <div class="cell"><span>가용 영역</span><svg class="caret sort"><use href="#filter"/></svg></div>
        <div class="cell"><span>퍼블릭 IPv4 DNS</span></div>
      </div>
      <div class="row">
        <div class="cell check"><span class="box"></span></div>
        <div class="cell"><span class="v-name">Fastcampus-M…</span></div>
        <div class="cell link"><span class="v-id">i-0ff18f6f53876335a</span></div>
        <div class="cell ok"><svg class="i32 run"><use href="#check"/></svg><span>실행 중</span><span class="zooms"><svg class="i32"><use href="#zoomin"/></svg><svg class="i32"><use href="#zoomout"/></svg></span></div>
        <div class="cell"><span class="v-type">t4g.xlarge</span></div>
        <div class="cell ok"><svg class="i32"><use href="#check"/></svg><span><span class="v-checks">3/3</span>개 검사 통과</span></div>
        <div class="cell link bold"><span>경보 보기</span><svg class="plus"><use href="#plus"/></svg></div>
        <div class="cell"><span class="v-az">ap-northeast-2a</span></div>
        <div class="cell"><span class="v-az">ec2-3-36-54</span></div>
      </div>
      <div class="h-track"><div class="h-thumb"></div></div>
    </div>
  </main>
</div>

<footer class="footer">
  <svg class="i32"><use href="#shell"/></svg><span class="cs">CloudShell</span><span class="fb">의견</span>
  <span class="copy"><span class="copy-la">© 2024, Amazon Web Services, Inc.</span> 또는 계열사.</span>
  <span class="fl">개인 정보 보호</span><span class="fl">약관</span><span class="fl">쿠키 기본 설정</span>
</footer>
</body>
</html>
```
FILE: styles.css
```css
* { box-sizing: border-box; }
body {
  margin: 0;
  width: 3024px;
  height: 1890px;
  overflow: hidden;
  display: flex;
  flex-direction: column;
  background: #fff;
  color: #0f141a;
  font-family: "Noto Sans", "Noto Sans CJK KR", sans-serif;
  font-size: 26.4px;
  white-space: nowrap;
}
button { font: inherit; border: 0; padding: 0; background: none; }
svg { display: block; flex: none; overflow: visible; }
.defs { position: absolute; }
.i26 { width: 26px; height: 26px; }
.i30 { width: 30px; height: 30px; }
.i32 { width: 32px; height: 32px; }
.i34 { width: 34px; height: 34px; }
.i40 { width: 40px; height: 40px; }
.ico-serif { font-family: "Liberation Serif", serif; font-weight: 700; }
.ico-w { font-family: "Liberation Serif", serif; }

/* browser tab strip */
.tabstrip {
  height: 82px;
  background: #1f2120;
  display: flex;
  align-items: center;
  padding-left: 152px;
  flex: none;
  font-family: Inter, "Noto Sans CJK KR", sans-serif;
  color: #c7c7c7;
}
.tab {
  width: 140px;
  height: 32px;
  margin-top: 2px;
  padding-left: 20px;
  border-right: 4px solid #3c3c3c;
  display: flex;
  align-items: center;
  gap: 16px;
  flex: none;
}
.tab.narrow { width: 138.2px; }
.tab.last { border-color: transparent; }
.tab-title {
  width: 46px;
  overflow: hidden;
  font-size: 23px;
  line-height: 32px;
  -webkit-mask-image: linear-gradient(90deg, #000 55%, transparent);
  mask-image: linear-gradient(90deg, #000 55%, transparent);
}
.fav { position: relative; width: 32px; height: 32px; flex: none; }
.fav .i32 { transform: scale(.82); }
.ring { position: absolute; left: -4px; top: -4px; width: 40px; height: 40px; }
.tab-active {
  width: 126px;
  height: 68px;
  margin-left: 3.6px;
  align-self: flex-end;
  background: #3c3c3c;
  border-radius: 20px 20px 0 0;
  display: flex;
  align-items: center;
  padding: 0 24px 12px 16px;
  justify-content: space-between;
  position: relative;
  flex: none;
}
.tab-active::before, .tab-active::after {
  content: "";
  position: absolute;
  bottom: 0;
  width: 22px;
  height: 22px;
}
.tab-active::before { left: -22px; background: radial-gradient(circle at 0 0, transparent 21.5px, #3c3c3c 22px); }
.tab-active::after { right: -22px; background: radial-gradient(circle at 100% 0, transparent 21.5px, #3c3c3c 22px); }
.ec2-fav { background: linear-gradient(45deg, #c65d2c, #f29d38); }
.ec2-tile { background: linear-gradient(45deg, #c65d2c, #f29d38); border-radius: 4px; }
.tab-close { width: 16px; height: 16px; color: #e3e3e3; }
.new-tab { width: 20px; height: 20px; margin-left: 30px; margin-top: -2px; }
.tab-menu {
  width: 56px;
  height: 56px;
  margin: 2px 12px 0 auto;
  border-radius: 20px;
  background: #3c3c3c;
  display: flex;
  align-items: center;
  justify-content: center;
}

/* browser toolbar */
.toolbar {
  height: 92px;
  background: #3c3c3c;
  display: flex;
  align-items: center;
  padding-left: 28px;
  gap: 40px;
  flex: none;
  color: #c7c7c7;
  position: relative;
  font-family: Inter, "Noto Sans CJK KR", sans-serif;
}
.toolbar::before, .toolbar::after {
  content: "";
  position: absolute;
  top: 0;
  width: 20px;
  height: 20px;
}
.toolbar::before { left: 0; background: radial-gradient(circle at 100% 100%, transparent 19.5px, #1f2120 20px); }
.toolbar::after { right: 0; background: radial-gradient(circle at 0 100%, transparent 19.5px, #1f2120 20px); }
.dim { color: #7b7b7b; }
.omnibox {
  width: 2364px;
  height: 68px;
  margin-left: -4px;
  border-radius: 34px;
  background: #282828;
  display: flex;
  align-items: center;
  padding: 0 32px 0 10px;
  flex: none;
}
.site-info {
  width: 48px;
  height: 48px;
  border-radius: 50%;
  background: #3c3c3c;
  color: #e3e3e3;
  display: flex;
  align-items: center;
  justify-content: center;
}
.url { margin-left: 16px; font-size: 27.4px; letter-spacing: .22px; color: #c7c7c7; }
.url b { font-weight: 400; color: #e6e6e6; }
.star { margin-left: auto; }
.ext { width: 44px; height: 44px; margin-left: -4px; margin-top: 12px; position: relative; }
.badge {
  position: absolute;
  left: 11px;
  top: 14px;
  width: 34px;
  height: 30px;
  border: 1px solid #3c3c3c;
  border-radius: 8px;
  background: #633bb5;
  color: #fff;
  font: 700 20px/28px Inter, sans-serif;
  text-align: center;
}
.puzzle { margin-left: -10px; margin-top: -6px; }
.tool-sep { width: 4px; height: 32px; background: #5d5d5d; border-radius: 2px; margin-left: -6px; flex: none; }
.avatar { width: 40px; height: 40px; margin-left: -8px; }
.kebab { width: 8px; height: 32px; margin-left: 8px; }

/* bookmarks */
.bookmarks {
  height: 70px;
  background: #3c3c3c;
  border-bottom: 2px solid #474747;
  display: flex;
  align-items: center;
  padding-left: 39px;
  flex: none;
  font-family: Inter, "Noto Sans CJK KR", sans-serif;
  font-size: 24px;
  color: #c7c7c7;
}
.bm-text { margin-top: -2px; flex: none; }
.ko { font-size: 22.4px; }
.apps-grid { width: 26px; height: 27px; }
.apps-label { margin-left: 15px; width: 94px; }
.group-grid { width: 28px; height: 28px; }
.bm-sep { margin-left: 31px; }
.bm-icons { display: flex; gap: 32px; margin-left: 26.5px; }
.bm { display: flex; align-items: center; gap: 16px; flex: none; }
.folder1 { margin-left: 37px; width: 122px; }
.google { width: 295px; gap: 12px; }
.folder2 { width: 109px; }
.folder3 { width: 160px; }
.movie { gap: 12px; }

/* console navigation */
.aws-nav {
  height: 82px;
  background: #161d26;
  border-bottom: 2px solid #424650;
  display: flex;
  align-items: center;
  flex: none;
  color: #ebebf0;
  font-size: 22.6px;
}
.aws-logo { width: 66px; height: 42px; margin-left: 33px; }
.logo-text { font-family: "Open Sans", sans-serif; font-weight: 500; }
.nav-sep { width: 2px; height: 48px; background: #424650; flex: none; }
.nav-sep.first { margin-left: 31px; }
.grid-icon { width: 32px; height: 32px; margin-left: 32px; }
.nav-search {
  width: 1080px;
  height: 60px;
  margin-left: 34px;
  border: 4px solid #656871;
  border-radius: 16px;
  background: #0f141a;
  display: flex;
  align-items: center;
  padding: 0 15px 0 22px;
  font-size: 26.4px;
  color: #c6c6cd;
}
.nav-search span { margin-top: -2px; }
.nav-search .ph { margin-left: 18px; font-style: italic; color: #a4a4ad; }
.hotkey { margin-left: auto; letter-spacing: .8px; color: #b4b4bb; }
.nav-right { margin-left: auto; width: 976px; display: flex; align-items: center; gap: 32.5px; }
.region, .account { display: flex; align-items: center; gap: 12px; }
.region { margin-left: 1px; margin-right: 4px; gap: 13px; font-weight: 500; }
.account { font-size: 23.6px; letter-spacing: .42px; }
.caret-s { width: 16px; height: 13px; }

.fav-bar {
  height: 66px;
  background: #161d26;
  border-bottom: 2px solid #424650;
  display: flex;
  align-items: center;
  padding-left: 32px;
  gap: 32px;
  flex: none;
  color: #ebebf0;
  font-size: 23px;
  letter-spacing: .5px;
}
.svc { display: flex; align-items: center; gap: 8px; }

.tool-bar {
  height: 84px;
  border-bottom: 2px solid #b4b4bb;
  display: flex;
  align-items: center;
  justify-content: space-between;
  padding: 0 46px 0 32px;
  flex: none;
}
.menu-btn {
  width: 60px;
  height: 60px;
  border-radius: 50%;
  background: #2969da;
  display: flex;
  align-items: center;
  justify-content: center;
}
.tool-right { display: flex; align-items: center; color: #424650; }
.tr-sep { width: 2px; height: 50px; background: #c6c6cd; margin: 0 32px 0 30px; }
.hexicon { margin-right: 44px; margin-left: -2px; }

/* side navigation */
.workspace { height: 1352px; display: flex; flex: none; }
.sidebar { width: 482px; border-right: 2px solid #b4b4bb; display: flex; flex: none; overflow: hidden; }
.side-nav { width: 450px; padding-top: 31px; position: relative; color: #424650; flex: none; }
.collapse { position: absolute; left: 382px; top: 46px; width: 16px; height: 28px; color: #424650; }
.item { display: block; height: 56px; line-height: 56px; padding-left: 56.5px; }
.item.active { color: #2969da; font-weight: 700; }
.item.sp { letter-spacing: .22px; }
.group {
  height: 74.2px;
  padding: 13px 0 0 20px;
  display: flex;
  align-items: center;
  gap: 16.5px;
  font-size: 29.6px;
  font-weight: 700;
  color: #0f141a;
}
.ebs { letter-spacing: .25px; }
.tri { width: 20px; height: 16px; }
.v-track { width: 30px; background: #fafafa; border-left: 2px solid #e8e8e8; border-right: 2px solid #ececec; padding: 6px 0 0 6px; }
.v-thumb { width: 16px; height: 864px; border-radius: 8px; background: #c1c1c1; }

/* instances table area */
.main { flex: 1; min-width: 0; padding: 24px 48px 0 48px; }
.title-row { height: 64px; display: flex; align-items: center; }
h1 { margin: 0; font-size: 36.8px; font-weight: 700; line-height: 48px; }
.count { font-weight: 400; letter-spacing: .5px; color: #656871; margin-left: 2px; }
.info { margin: 8px 0 0 17px; font-size: 22.6px; font-weight: 700; color: #2969da; }
.actions { margin-left: auto; display: flex; align-items: center; gap: 16px; }
.updated { font-size: 22.6px; line-height: 32px; text-align: right; color: #656871; }
.ago { letter-spacing: .3px; }
.refresh {
  width: 64px;
  height: 64px;
  border: 4px solid #2969da;
  border-radius: 50%;
  color: #2969da;
  display: flex;
  align-items: center;
  justify-content: center;
}
.btn {
  height: 64px;
  border: 4px solid #2969da;
  border-radius: 32px;
  padding: 0 38px 0 40px;
  color: #2969da;
  font-weight: 700;
  display: flex;
  align-items: center;
  gap: 22px;
}
.btn.disabled { border-color: #b4b4bb; color: #8c8c94; padding: 0 40.5px; }
.btn.clear { padding: 0 40px; }
.btn span, .primary span, .select span, .filter-input span { margin-top: -3px; }
.caret { width: 20px; height: 16px; }
.split { display: flex; gap: 4px; font-weight: 700; }
.primary, .primary-menu {
  height: 64px;
  background: #f29d38;
  color: #0f141a;
  display: flex;
  align-items: center;
  justify-content: center;
  font-weight: 700;
}
.primary { width: 234px; border-radius: 32px 0 0 32px; padding-left: 8px; }
.primary-menu { width: 72px; border-radius: 0 32px 32px 0; padding-right: 8px; }
.search-row { display: flex; gap: 36px; margin-top: 16px; }
.filter-input, .select {
  height: 64px;
  border: 4px solid #8c8c94;
  border-radius: 16px;
  display: flex;
  align-items: center;
}
.filter-input { width: 1296px; padding-left: 22px; gap: 20px; color: #656871; font-style: italic; }
.la { letter-spacing: .95px; }
.select { width: 208px; padding-left: 24px; gap: 22px; }
.select .caret { color: #2969da; }
.token-row { display: flex; margin-top: 16px; }
.token {
  width: 399px;
  height: 64px;
  border: 4px solid #2969da;
  border-radius: 16px;
  background: #f0fbff;
  display: flex;
}
.token-label { width: 336px; border-right: 4px solid #2969da; padding: 0 0 0 24px; line-height: 54px; }
.token-label u { display: inline-block; text-decoration: none; line-height: 36px; letter-spacing: .15px; border-bottom: 2px dashed #0f141a; }
.token-x { flex: 1; display: flex; align-items: center; justify-content: center; color: #424650; }
.token-sep { width: 2px; height: 64px; background: #c6c6cd; margin: 0 48px; }
.pager { margin-left: auto; margin-top: 8px; height: 64px; display: flex; align-items: center; color: #b4b4bb; padding-right: 12px; }
.pager b { width: 97px; text-align: center; color: #0f141a; }
.chev { width: 16px; height: 28px; }
.pager-sep { width: 2px; height: 64px; background: #c6c6cd; margin: 0 28px; }
.dark { color: #424650; }

.table { margin-top: 20px; overflow: hidden; }
.row {
  display: grid;
  grid-template-columns: 80px 280px 400px 320px 300px 300px 260px 340px 400px;
  height: 69px;
  align-items: center;
  padding-bottom: 5px;
}
.row.head { height: 68px; padding: 4px 0 0; border-bottom: 2px solid #c6c6cd; color: #424650; font-weight: 700; }
.head .box { margin-top: -2px; }
.head span { margin-top: -2px; }
.head .h-name { margin-top: 0; letter-spacing: -1px; }
.h-id { letter-spacing: -.3px; }
.cell { display: flex; align-items: center; padding-left: 32px; height: 36px; }
.head .cell { border-right: 4px solid #8c8c94; }
.head .check { border-color: #c6c6cd; }
.check { padding-left: 25px; }
.box { width: 32px; height: 32px; border: 4px solid #8c8c94; border-radius: 6px; flex: none; }
.sort { margin-left: auto; margin-right: 26px; }
.pencil { width: 29px; height: 29px; margin-left: 10px; }
.link { color: #2969da; }
.bold { font-weight: 700; }
.ok { color: #2f7d32; gap: 8px; }
.run { margin-top: 4px; }
.v-name { font-size: 27px; letter-spacing: .25px; }
.v-id { font-size: 27.4px; letter-spacing: .58px; }
.v-type { letter-spacing: .17px; }
.v-az { font-size: 27px; letter-spacing: .25px; }
.v-checks { font-size: 27.4px; letter-spacing: 1.8px; }
.zooms { display: flex; gap: 16px; margin-left: auto; margin-right: 40px; color: #2969da; }
.plus { width: 24px; height: 24px; margin-left: 56px; }
.h-track { height: 30px; background: #fafafa; border-top: 2px solid #e8e8e8; border-bottom: 2px solid #ececec; padding: 6px 0 0 6px; }
.h-thumb { width: 985px; height: 16px; border-radius: 8px; background: #c1c1c1; }

.footer {
  height: 62px;
  background: #161d26;
  border-top: 2px solid #424650;
  border-bottom: 2px solid #0f1319;
  display: flex;
  align-items: center;
  padding: 0 32px;
  flex: none;
  color: #ebebf0;
  font-size: 22.6px;
  font-weight: 500;
}
.cs { margin-left: 10.5px; letter-spacing: .2px; }
.fb { margin-left: 50px; }
.copy { margin-left: auto; margin-right: 12px; color: #c6c6cd; font-weight: 400; }
.copy-la { letter-spacing: .35px; }
.fl { margin-left: 49px; }
```
